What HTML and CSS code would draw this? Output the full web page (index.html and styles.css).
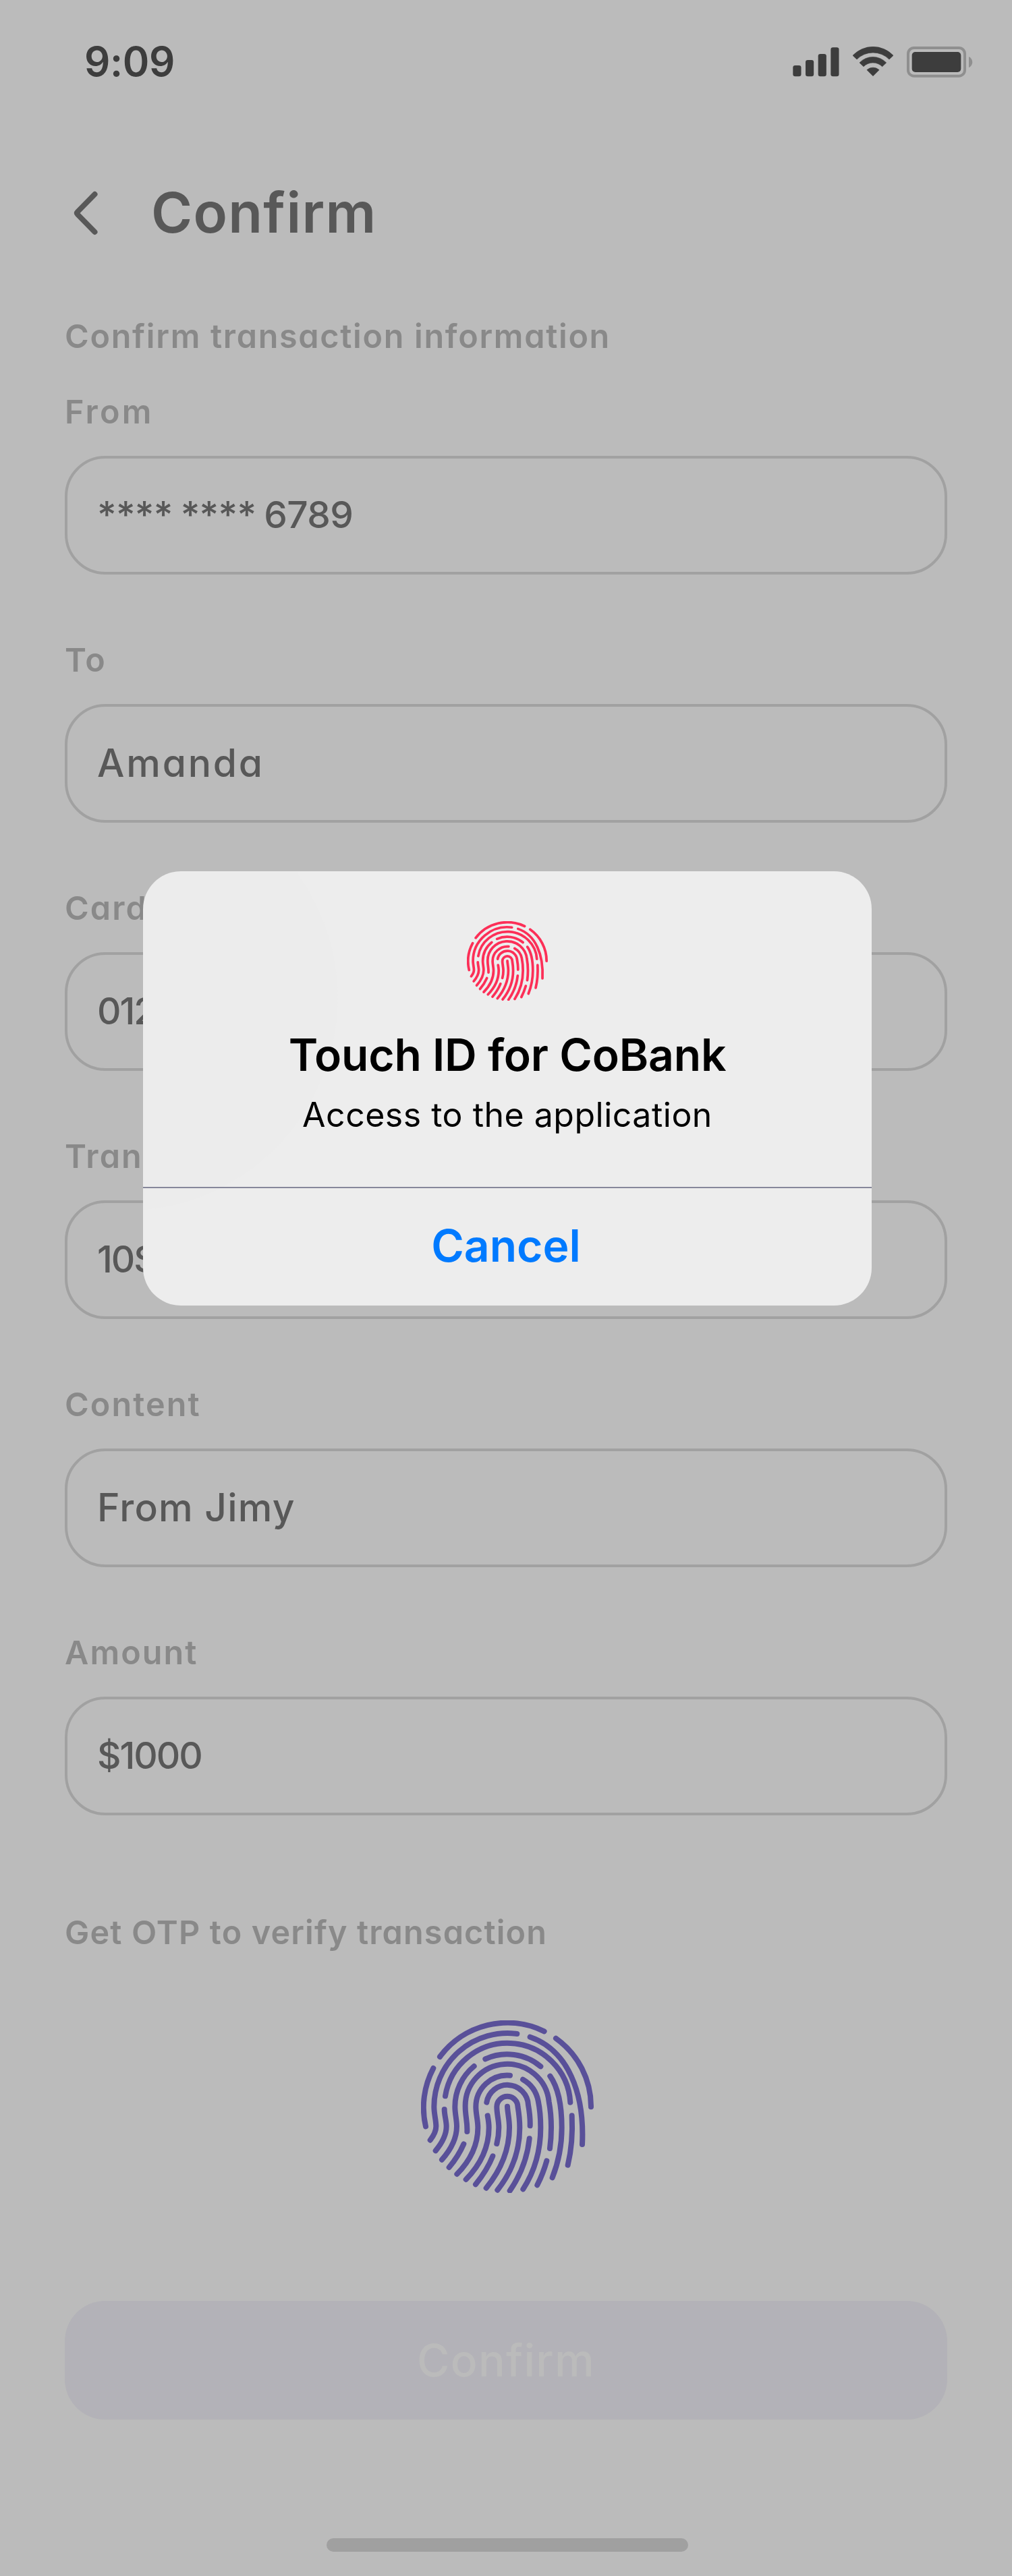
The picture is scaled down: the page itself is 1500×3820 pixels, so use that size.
FILE: index.html
```html
<!DOCTYPE html>
<html lang="en">
<head>
<meta charset="utf-8">
<title>Confirm</title>
<link rel="stylesheet" href="styles.css">
</head>
<body>
<svg class="defs" aria-hidden="true">
  <symbol id="fingerprint" viewBox="72 78 768 768" preserveAspectRatio="none">
    <g fill="none" stroke="currentColor" stroke-width="24" stroke-linecap="round" stroke-linejoin="round">
      <path d="M456 461C457 490 465 515 465 555C465 655 430 740 362 824"/>
      <path d="M409 627Q418 592 418 555C418 522 409 495 409 463A46.6 46.6 0 0 1 502.600 463C507 490 511 520 511 555C511 660 478 750 412 833"/>
      <path d="M391 682C373 728 347 768 315 808"/>
      <path d="M364 443A93.200 93.200 0 0 1 549 455C554 483 558 515 557 547"/>
      <path d="M554 604C545 690 516 765 467 836"/>
      <path d="M368 502C371 518 374 535 374 555C374 640 336 720 272 786"/>
      <path d="M468 323A140 140 0 0 0 316 463C316 495 325 522 325 555C325 632 290 703 232 762"/>
      <path d="M525 341A140 140 0 0 1 593 436C601 475 604 515 604 555C604 660 577 750 526 829"/>
      <path d="M277 573C279 530 269 505 269 463A186.500 186.500 0 0 1 641 440C649 482 651 520 651 555Q651 602 645 648"/>
      <path d="M631 703Q616 757 589 811"/>
      <path d="M262 628Q238 683 197 732"/>
      <path d="M308 282A233 233 0 0 0 223 463C223 495 231 520 231 550C231 608 203 655 165 698"/>
      <path d="M358 250A233 233 0 0 1 604 283"/>
      <path d="M646 326C684 380 698 470 698 555C698 635 683 710 656 778"/>
      <path d="M180 415A280 280 0 0 1 736 443"/>
      <path d="M176 474C176 500 185 525 185 550C185 590 162 628 137 658"/>
      <path d="M743 502C747 580 742 650 725 722"/>
      <path d="M113 611C127 593 139 574 139 550C139 522 130 495 130 463A326.500 326.500 0 0 1 499 138"/>
      <path d="M557 152C725 210 800 400 789 630"/>
      <path d="M127 291A373 373 0 0 0 93 550"/>
      <path d="M156 240A373 373 0 0 1 620 127"/>
      <path d="M672 158A373 373 0 0 1 828 463"/>
    </g>
  </symbol>
</svg>

<div class="screen">
  <header class="status">
    <span class="status-time">9:09</span>
    <div class="status-icons">
      <svg width="69" height="46" viewBox="103 87 207 138">
        <g fill="#3d3d3d">
          <rect x="104" y="171" width="36.500" height="49" rx="10"/>
          <rect x="160" y="147" width="36.500" height="73" rx="10"/>
          <rect x="216" y="120" width="36.500" height="100" rx="10"/>
          <rect x="272" y="91" width="36.500" height="129" rx="10"/>
        </g>
      </svg>
      <svg width="62" height="46" viewBox="367 87 186 138">
        <g fill="#3d3d3d" stroke="#3d3d3d" stroke-width="2" stroke-linejoin="round">
          <path d="M370 127A123.500 123.500 0 0 1 550 127L532 144A101.400 101.400 0 0 0 388 144Z"/>
          <path d="M400 159A82 82 0 0 1 519 159L501 176A59 59 0 0 0 418 176Z"/>
          <path d="M433 191A40 40 0 0 1 487 191L460 218Z"/>
        </g>
      </svg>
      <svg width="98" height="46" viewBox="612 87 294 138">
        <rect x="618" y="93" width="252" height="125" rx="26" fill="none" stroke="#8f8f8f" stroke-width="12"/>
        <rect x="635" y="111" width="218" height="90" rx="15" fill="#3d3d3d"/>
        <path d="M888 132C909 143 909 170 888 181Z" fill="#8f8f8f"/>
      </svg>
    </div>
  </header>

  <div class="heading">
    <svg width="64" height="68" viewBox="0 0 64 68">
      <path d="M44.500 7L19 33Q17 35 19 37L44.500 63" fill="none" stroke="#585858" stroke-width="8" stroke-linecap="round" stroke-linejoin="round"/>
    </svg>
    <h1>Confirm</h1>
  </div>

  <main>
    <h2 class="section">Confirm transaction information</h2>
    <div class="fields">
      <div class="field">
        <div class="label label-wide">From</div>
        <div class="input masked">**** **** 6789</div>
      </div>
      <div class="field">
        <div class="label">To</div>
        <div class="input name">Amanda</div>
      </div>
      <div class="field">
        <div class="label">Card number</div>
        <div class="input digits">0123456789</div>
      </div>
      <div class="field">
        <div class="label">Transaction fee</div>
        <div class="input digits">10$</div>
      </div>
      <div class="field">
        <div class="label">Content</div>
        <div class="input">From Jimy</div>
      </div>
      <div class="field">
        <div class="label">Amount</div>
        <div class="input digits">$1000</div>
      </div>
    </div>
    <h2 class="section section-otp">Get OTP to verify transaction</h2>
    <svg class="touch"><use href="#fingerprint"/></svg>
    <button class="confirm" disabled>Confirm</button>
  </main>
  <div class="home-bar"></div>

  <div class="dialog" role="dialog">
    <div class="dialog-body">
      <svg class="dialog-icon"><use href="#fingerprint"/></svg>
      <div class="dialog-title">Touch ID for CoBank</div>
      <div class="dialog-text">Access to the application</div>
    </div>
    <button class="dialog-cancel">Cancel</button>
  </div>
</div>
</body>
</html>
```
FILE: styles.css
```css
* { box-sizing: border-box; }

body {
  margin: 0;
  background: #bbbbbb;
  font-family: Inter, "Liberation Sans", sans-serif;
  font-feature-settings: "cv11";
}

h1, h2 { margin: 0; }

.defs { display: none; }

.screen {
  position: relative;
  width: 1500px;
  height: 3820px;
  overflow: hidden;
}

.status {
  display: flex;
  align-items: center;
  justify-content: space-between;
  height: 182px;
  padding: 0 58px 0 125px;
}

.status-time {
  font-size: 60px;
  font-weight: 600;
  letter-spacing: -0.4px;
  color: #3d3d3d;
}

.status-icons {
  display: flex;
  gap: 19px;
  padding-top: 2px;
}

.heading {
  display: flex;
  align-items: center;
  gap: 64px;
  height: 100px;
  margin: 83px 96px 0;
}

.heading h1 {
  font-size: 83px;
  font-weight: 600;
  line-height: 98px;
  letter-spacing: 1.3px;
  color: #585858;
}

main {
  display: flex;
  flex-direction: column;
  margin: 104px 96px 0;
}

.section, .label {
  font-size: 48.5px;
  font-weight: 600;
  line-height: 59px;
  height: 60px;
  letter-spacing: 2.1px;
  color: #898989;
  white-space: nowrap;
}

.section { letter-spacing: 1.7px; }
.section-otp { margin-top: 144px; letter-spacing: 1.15px; }
.label-wide { letter-spacing: 3.2px; }

.fields {
  display: flex;
  flex-direction: column;
  gap: 97px;
  margin-top: 52px;
}

.input {
  height: 176px;
  margin-top: 35px;
  padding: 0 44px;
  border: 4px solid #a1a1a1;
  border-radius: 60px;
  font-size: 57px;
  font-weight: 500;
  line-height: 167px;
  letter-spacing: 1.2px;
  color: #585858;
}

.masked { font-size: 55px; letter-spacing: -0.7px; word-spacing: -2px; }
.name { letter-spacing: 2.8px; }
.digits { font-size: 55px; letter-spacing: -2px; }

.touch {
  width: 256px;
  height: 256px;
  margin: 100px auto 160px 528px;
  color: #595099;
}

.confirm {
  height: 176px;
  padding: 0;
  border: 0;
  border-radius: 60px;
  background: #b3b2b8;
  font: 500 66px/176px Inter, "Liberation Sans", sans-serif;
  letter-spacing: 1.3px;
  color: #bbbbbb;
}

.home-bar {
  width: 536px;
  height: 20px;
  margin: 176px auto 0 484px;
  border-radius: 10px;
  background: #a0a0a0;
}

/* Touch ID prompt laid over the form */
.dialog {
  position: absolute;
  top: 1292px;
  left: 212px;
  width: 1080px;
  height: 644px;
  display: flex;
  flex-direction: column;
  border-radius: 56px;
  overflow: hidden;
  background: radial-gradient(circle at -27px 188px, #ececec 315px, #ededed 316px);
  color: #000;
  text-align: center;
  font-feature-settings: normal;
}

.dialog-body {
  display: flex;
  flex-direction: column;
  align-items: center;
  height: 468px;
  padding-top: 74px;
}

.dialog-icon {
  width: 120px;
  height: 118px;
  color: #fc2f57;
}

.dialog-title {
  margin-top: 40px;
  font-size: 66px;
  font-weight: 600;
  line-height: 80px;
  letter-spacing: -0.2px;
}

.dialog-text {
  margin-top: 17px;
  font-size: 50px;
  line-height: 64px;
  letter-spacing: 0.5px;
}

.dialog-cancel {
  flex: 1;
  padding: 0 4px 4px 0;
  border: 0;
  border-top: 2px solid #86879a;
  background: none;
  font: 600 66px/80px Inter, "Liberation Sans", sans-serif;
  letter-spacing: 0;
  color: #007aff;
}
```
